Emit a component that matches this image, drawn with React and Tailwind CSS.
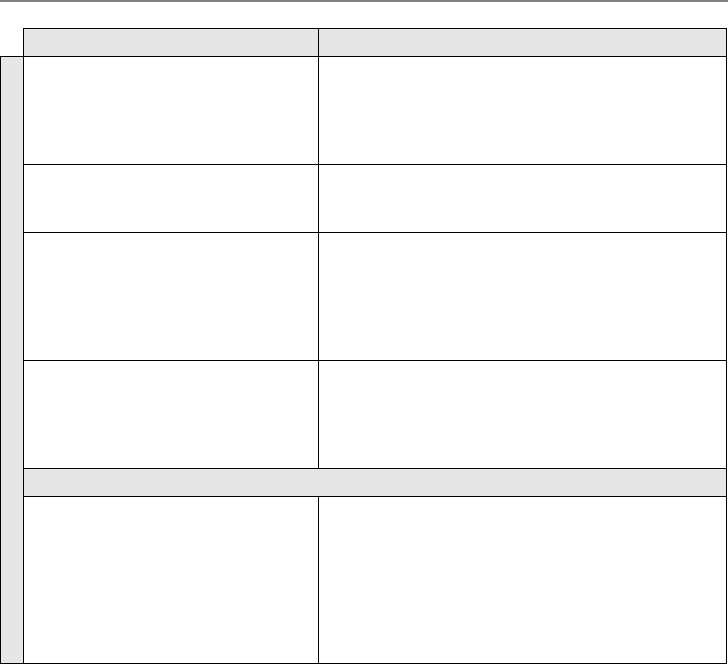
import React from 'react';

const rows = [108, 68, 128, 108];

export default function App() {
    return (
        <div className="w-[728px] h-[665px] bg-white overflow-hidden font-['Liberation_Sans',sans-serif] text-sm">
            {/* top rule */}
            <div className="h-[2px] bg-[#808080]" />

            <table className="mt-[26px] w-[727px] border-collapse table-fixed">
                <colgroup>
                    <col className="w-[23px]" />
                    <col className="w-[295px]" />
                    <col />
                </colgroup>
                <thead>
                    <tr className="h-[28px]">
                        <th className="p-0" />
                        <th className="p-0 border border-black bg-[#e6e6e6]" />
                        <th className="p-0 border border-black bg-[#e6e6e6]" />
                    </tr>
                </thead>
                <tbody>
                    {rows.map((h, i) => (
                        <tr key={i} style={{ height: h }}>
                            {i === 0 && (
                                <td rowSpan={6} className="p-0 border border-black bg-[#e6e6e6]" />
                            )}
                            <td className="p-0 border border-black" />
                            <td className="p-0 border border-black" />
                        </tr>
                    ))}
                    {/* group row */}
                    <tr className="h-[28px]">
                        <td colSpan={2} className="p-0 border border-black bg-[#e6e6e6]" />
                    </tr>
                    <tr className="h-[167px]">
                        <td className="p-0 border border-black" />
                        <td className="p-0 border border-black" />
                    </tr>
                </tbody>
            </table>
        </div>
    );
}
